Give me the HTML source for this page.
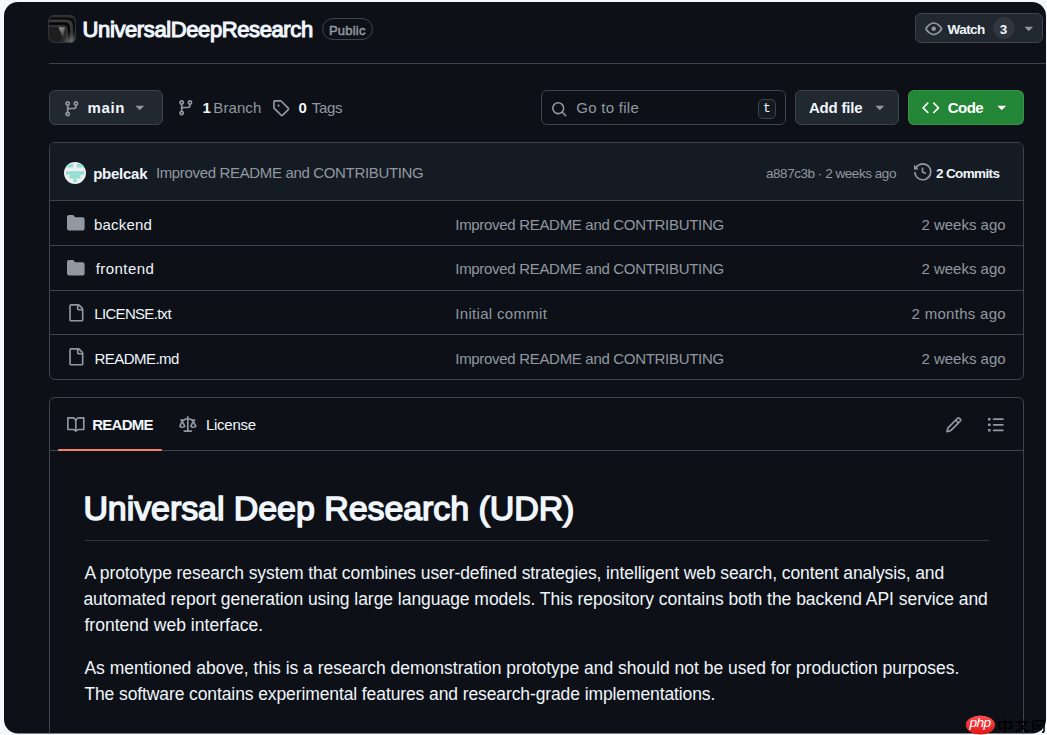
<!DOCTYPE html>
<html><head><meta charset="utf-8">
<style>
*{box-sizing:border-box;margin:0;padding:0}
html,body{width:1047px;height:735px;overflow:hidden;background:#f5f7fa;font-family:"Liberation Sans",sans-serif}
#wrap{position:absolute;left:0;top:0;width:1047px;height:735px;background:#0d1117;clip-path:inset(2px 1px 1.4px 4px round 14px)}
.a{position:absolute;white-space:nowrap;line-height:1}
.fg{color:#f0f6fc}
.mu{color:#9198a1}
.b{font-weight:700}
.box{position:absolute;border:1px solid #3d444d;border-radius:6px}
.btn{position:absolute;background:#212830;border:1px solid #3d444d;border-radius:6px}
svg{position:absolute;overflow:visible}
.hr{position:absolute;height:1px;background:#3d444d}
</style></head><body>
<div id="wrap">

<!-- repo header -->
<svg style="left:48px;top:15px" width="28" height="28" viewBox="0 0 28 28">
 <defs>
  <clipPath id="ca"><rect x="0" y="0" width="28" height="28" rx="6"/></clipPath>
  <linearGradient id="gw" x1="0" y1="0" x2="0.3" y2="1"><stop offset="0" stop-color="#9a9a9a"/><stop offset="1" stop-color="#3a3a3a"/></linearGradient>
  <radialGradient id="gr" cx="0.85" cy="1" r="0.5"><stop offset="0" stop-color="#8a8a8a"/><stop offset="1" stop-color="#2a2a2a" stop-opacity="0"/></radialGradient>
 </defs>
 <g clip-path="url(#ca)">
  <rect width="28" height="28" fill="#1e1e1e"/>
  <rect width="28" height="3" fill="#2e2e2e"/>
  <path d="M0 3.4 H19 Q26 3.4 26 10 V28" fill="none" stroke="#0a0a0a" stroke-width="2"/>
  <path d="M0 6 H18 Q23.5 6 23.5 12 V28" fill="none" stroke="#3c3c3c" stroke-width="2.6"/>
  <path d="M0 8.7 H16 Q21 8.7 21 14 V28" fill="none" stroke="#050505" stroke-width="2.2"/>
  <path d="M0 11.2 H14 Q18.6 11.2 18.6 16 V28" fill="none" stroke="#333" stroke-width="2.2"/>
  <path d="M10.5 12.3 L16.8 12.3 Q17 18 14.8 23 Z" fill="url(#gw)"/>
  <rect width="28" height="28" fill="url(#gr)"/>
 </g>
 <rect x="0.5" y="0.5" width="27" height="27" rx="6" fill="none" stroke="#30363d" stroke-width="1"/>
</svg>
<div class="box" style="left:322px;top:18px;width:51px;height:22px;border-radius:11px"></div>

<div class="btn" style="left:915px;top:13px;width:128px;height:30px"></div>
<svg style="left:925px;top:19.9px" width="17.6" height="17.6" viewBox="0 0 16 16"><path fill="#9198a1" d="M8 2c1.981 0 3.671.992 4.933 2.078 1.27 1.091 2.187 2.345 2.637 3.023a1.62 1.62 0 0 1 0 1.798c-.45.678-1.367 1.932-2.637 3.023C11.67 13.008 9.981 14 8 14c-1.981 0-3.671-.992-4.933-2.078C1.797 10.83.88 9.576.43 8.898a1.62 1.62 0 0 1 0-1.798c.45-.677 1.367-1.931 2.637-3.022C4.33 2.992 6.019 2 8 2ZM1.679 7.932a.12.12 0 0 0 0 .136c.411.622 1.241 1.75 2.366 2.717C5.176 11.758 6.527 12.5 8 12.5c1.473 0 2.825-.742 3.955-1.715 1.124-.967 1.954-2.096 2.366-2.717a.12.12 0 0 0 0-.136c-.412-.621-1.242-1.75-2.366-2.717C10.824 4.242 9.473 3.5 8 3.5c-1.473 0-2.825.742-3.955 1.715-1.124.967-1.954 2.096-2.366 2.717ZM8 10a2 2 0 1 1-.001-3.999A2 2 0 0 1 8 10Z"/></svg>
<div style="position:absolute;left:993px;top:17px;width:22px;height:22px;border-radius:11px;background:#2f363e"></div>
<svg style="left:1019.5px;top:19.1px" width="17.6" height="17.6" viewBox="0 0 16 16"><path fill="#9198a1" d="m4.427 7.427 3.396 3.396a.25.25 0 0 0 .354 0l3.396-3.396A.25.25 0 0 0 11.396 7H4.604a.25.25 0 0 0-.177.427Z"/></svg>

<div class="hr" style="left:49px;top:63px;width:997px"></div>

<!-- toolbar -->
<div class="btn" style="left:49px;top:90px;width:114px;height:35px"></div>
<svg style="left:62.6px;top:99.9px" width="17.6" height="17.6" viewBox="0 0 16 16"><path fill="#9198a1" d="M9.5 3.25a2.25 2.25 0 1 1 3 2.122V6A2.5 2.5 0 0 1 10 8.5H6a1 1 0 0 0-1 1v1.128a2.251 2.251 0 1 1-1.5 0V5.372a2.25 2.25 0 1 1 1.5 0v1.836A2.493 2.493 0 0 1 6 7h4a1 1 0 0 0 1-1v-.628A2.25 2.25 0 0 1 9.5 3.25Zm-6 0a.75.75 0 1 0 1.5 0 .75.75 0 0 0-1.5 0Zm8.25-.75a.75.75 0 1 0 0 1.5.75.75 0 0 0 0-1.5ZM4.25 12a.75.75 0 1 0 0 1.5.75.75 0 0 0 0-1.5Z"/></svg>
<svg style="left:130.8px;top:98.3px" width="17.6" height="17.6" viewBox="0 0 16 16"><path fill="#9198a1" d="m4.427 7.427 3.396 3.396a.25.25 0 0 0 .354 0l3.396-3.396A.25.25 0 0 0 11.396 7H4.604a.25.25 0 0 0-.177.427Z"/></svg>

<svg style="left:176.7px;top:99.2px" width="17.6" height="17.6" viewBox="0 0 16 16"><path fill="#9198a1" d="M9.5 3.25a2.25 2.25 0 1 1 3 2.122V6A2.5 2.5 0 0 1 10 8.5H6a1 1 0 0 0-1 1v1.128a2.251 2.251 0 1 1-1.5 0V5.372a2.25 2.25 0 1 1 1.5 0v1.836A2.493 2.493 0 0 1 6 7h4a1 1 0 0 0 1-1v-.628A2.25 2.25 0 0 1 9.5 3.25Zm-6 0a.75.75 0 1 0 1.5 0 .75.75 0 0 0-1.5 0Zm8.25-.75a.75.75 0 1 0 0 1.5.75.75 0 0 0 0-1.5ZM4.25 12a.75.75 0 1 0 0 1.5.75.75 0 0 0 0-1.5Z"/></svg>
<svg style="left:271.9px;top:98.9px" width="17.6" height="17.6" viewBox="0 0 16 16"><path fill="#9198a1" d="M1 7.775V2.75C1 1.784 1.784 1 2.75 1h5.025c.464 0 .91.184 1.238.513l6.25 6.25a1.75 1.75 0 0 1 0 2.474l-5.026 5.026a1.75 1.75 0 0 1-2.474 0l-6.25-6.25A1.752 1.752 0 0 1 1 7.775Zm1.5 0c0 .066.026.13.073.177l6.25 6.25a.25.25 0 0 0 .354 0l5.025-5.025a.25.25 0 0 0 0-.354l-6.25-6.25a.25.25 0 0 0-.177-.073H2.75a.25.25 0 0 0-.25.25ZM6 5a1 1 0 1 1 0 2 1 1 0 0 1 0-2Z"/></svg>

<div class="box" style="left:541px;top:90px;width:245px;height:35px"></div>
<svg style="left:550.8px;top:100.8px" width="16.5" height="16.5" viewBox="0 0 16 16"><path fill="#9198a1" d="M10.68 11.74a6 6 0 0 1-7.922-8.982 6 6 0 0 1 8.982 7.922l3.04 3.04a.749.749 0 0 1-.326 1.275.749.749 0 0 1-.734-.215ZM11.5 7a4.499 4.499 0 1 0-8.997 0A4.499 4.499 0 0 0 11.5 7Z"/></svg>
<div class="box" style="left:758px;top:98.5px;width:18px;height:20px;border-radius:5px;background:#151b23"></div>
<span style="position:absolute;left:763px;top:101.5px;line-height:1;font-family:'Liberation Mono',monospace;font-size:13px;color:#f0f6fc">t</span>

<div class="btn" style="left:794.5px;top:90px;width:104px;height:35px"></div>
<svg style="left:870.9px;top:98.3px" width="17.6" height="17.6" viewBox="0 0 16 16"><path fill="#9198a1" d="m4.427 7.427 3.396 3.396a.25.25 0 0 0 .354 0l3.396-3.396A.25.25 0 0 0 11.396 7H4.604a.25.25 0 0 0-.177.427Z"/></svg>

<div style="position:absolute;left:908px;top:90px;width:116px;height:35px;background:#238636;border:1px solid rgba(240,246,252,0.1);border-radius:6px"></div>
<svg style="left:922px;top:98.7px" width="17.6" height="17.6" viewBox="0 0 16 16"><path fill="#fff" d="m11.28 3.22 4.25 4.25a.75.75 0 0 1 0 1.06l-4.25 4.25a.749.749 0 0 1-1.275-.326.749.749 0 0 1 .215-.734L13.94 8l-3.72-3.72a.749.749 0 0 1 .326-1.275.749.749 0 0 1 .734.215Zm-6.56 0a.751.751 0 0 1 1.042.018.751.751 0 0 1 .018 1.042L2.06 8l3.72 3.72a.749.749 0 0 1-.326 1.275.749.749 0 0 1-.734-.215L.47 8.53a.75.75 0 0 1 0-1.06Z"/></svg>
<svg style="left:992.7px;top:98.3px" width="17.6" height="17.6" viewBox="0 0 16 16"><path fill="#fff" d="m4.427 7.427 3.396 3.396a.25.25 0 0 0 .354 0l3.396-3.396A.25.25 0 0 0 11.396 7H4.604a.25.25 0 0 0-.177.427Z"/></svg>

<!-- files box -->
<div class="box" style="left:49px;top:142px;width:975px;height:238px;overflow:hidden">
  <div style="position:absolute;left:0;top:0;right:0;height:58px;background:#151b23;border-bottom:1px solid #3d444d"></div>
  <div style="position:absolute;left:0;right:0;top:102px;height:1px;background:#3d444d"></div>
  <div style="position:absolute;left:0;right:0;top:147px;height:1px;background:#3d444d"></div>
  <div style="position:absolute;left:0;right:0;top:191px;height:1px;background:#3d444d"></div>
</div>

<!-- commit header content -->
<svg style="left:64px;top:162px" width="22" height="22" viewBox="0 0 22 22">
 <defs><clipPath id="cu"><circle cx="11" cy="11" r="11"/></clipPath></defs>
 <g clip-path="url(#cu)">
  <rect width="22" height="22" fill="#f0f0f0"/>
  <g fill="#93e0d2">
   <rect x="1.83" y="1.83" width="7.34" height="3.67"/>
   <rect x="12.83" y="1.83" width="7.34" height="3.67"/>
   <rect x="1.83" y="9.17" width="18.34" height="3.67"/>
   <rect x="5.5" y="12.83" width="11" height="3.67"/>
   <rect x="9.17" y="16.5" width="3.67" height="3.67"/>
  </g>
 </g>
</svg>
<svg style="left:914px;top:162.8px" width="17.6" height="17.6" viewBox="0 0 16 16"><path fill="#9198a1" d="m.427 1.927 1.215 1.215a8.002 8.002 0 1 1-1.6 5.685.75.75 0 1 1 1.493-.154 6.5 6.5 0 1 0 1.18-4.458l1.358 1.358A.25.25 0 0 1 3.896 6H.25A.25.25 0 0 1 0 5.75V2.104a.25.25 0 0 1 .427-.177ZM7.75 4a.75.75 0 0 1 .75.75v2.992l2.028.812a.75.75 0 0 1-.557 1.392l-2.5-1A.751.751 0 0 1 7 8.25v-3.5A.75.75 0 0 1 7.75 4Z"/></svg>

<!-- rows -->
<svg style="left:66.8px;top:214px" width="17.6" height="17.6" viewBox="0 0 16 16"><path fill="#9198a1" d="M1.75 1A1.75 1.75 0 0 0 0 2.75v10.5C0 14.216.784 15 1.75 15h12.5A1.75 1.75 0 0 0 16 13.25v-8.5A1.75 1.75 0 0 0 14.25 3H7.5a.25.25 0 0 1-.2-.1l-.9-1.2C6.07 1.26 5.55 1 5 1H1.75Z"/></svg>

<svg style="left:66.8px;top:258.6px" width="17.6" height="17.6" viewBox="0 0 16 16"><path fill="#9198a1" d="M1.75 1A1.75 1.75 0 0 0 0 2.75v10.5C0 14.216.784 15 1.75 15h12.5A1.75 1.75 0 0 0 16 13.25v-8.5A1.75 1.75 0 0 0 14.25 3H7.5a.25.25 0 0 1-.2-.1l-.9-1.2C6.07 1.26 5.55 1 5 1H1.75Z"/></svg>

<svg style="left:66.8px;top:303.5px" width="17.6" height="17.6" viewBox="0 0 16 16"><path fill="#9198a1" d="M2 1.75C2 .784 2.784 0 3.75 0h6.586c.464 0 .909.184 1.237.513l2.914 2.914c.329.328.513.773.513 1.237v9.586A1.75 1.75 0 0 1 13.25 16h-9.5A1.75 1.75 0 0 1 2 14.25Zm1.75-.25a.25.25 0 0 0-.25.25v12.5c0 .138.112.25.25.25h9.5a.25.25 0 0 0 .25-.25V6h-2.75A1.75 1.75 0 0 1 9 4.25V1.5Zm6.75.062V4.25c0 .138.112.25.25.25h2.688l-.011-.013-2.914-2.914-.013-.011Z"/></svg>

<svg style="left:66.8px;top:348px" width="17.6" height="17.6" viewBox="0 0 16 16"><path fill="#9198a1" d="M2 1.75C2 .784 2.784 0 3.75 0h6.586c.464 0 .909.184 1.237.513l2.914 2.914c.329.328.513.773.513 1.237v9.586A1.75 1.75 0 0 1 13.25 16h-9.5A1.75 1.75 0 0 1 2 14.25Zm1.75-.25a.25.25 0 0 0-.25.25v12.5c0 .138.112.25.25.25h9.5a.25.25 0 0 0 .25-.25V6h-2.75A1.75 1.75 0 0 1 9 4.25V1.5Zm6.75.062V4.25c0 .138.112.25.25.25h2.688l-.011-.013-2.914-2.914-.013-.011Z"/></svg>

<!-- readme box -->
<div class="box" style="left:49px;top:397px;width:975px;height:400px"></div>
<div class="hr" style="left:50px;top:450px;width:973px"></div>
<div style="position:absolute;left:58px;top:449px;width:104px;height:2px;background:#f78166;border-radius:1px"></div>
<svg style="left:67px;top:415.9px" width="17.6" height="17.6" viewBox="0 0 16 16"><path fill="#9198a1" d="M0 1.75A.75.75 0 0 1 .75 1h4.253c1.227 0 2.317.59 3 1.501A3.743 3.743 0 0 1 11.006 1h4.245a.75.75 0 0 1 .75.75v10.5a.75.75 0 0 1-.75.75h-4.507a2.25 2.25 0 0 0-1.591.659l-.622.621a.75.75 0 0 1-1.06 0l-.622-.621A2.25 2.25 0 0 0 5.258 13H.75a.75.75 0 0 1-.75-.75Zm7.251 10.324.004-5.073-.002-2.253A2.25 2.25 0 0 0 5.003 2.5H1.5v9h3.757a3.75 3.75 0 0 1 1.994.574ZM8.755 4.75l-.004 7.322a3.752 3.752 0 0 1 1.992-.572H14.5v-9h-3.495a2.25 2.25 0 0 0-2.25 2.25Z"/></svg>
<svg style="left:179.4px;top:415.7px" width="17.6" height="17.6" viewBox="0 0 16 16"><path fill="#9198a1" d="M8.75.75V2h.985c.304 0 .603.08.867.231l1.29.736c.038.022.08.033.124.033h2.234a.75.75 0 0 1 0 1.5h-.427l2.111 4.692a.75.75 0 0 1-.154.838l-.53-.53.529.531-.001.002-.002.002-.006.006-.006.005-.01.01-.045.04c-.21.176-.441.327-.686.45C14.556 10.780 13.880 11 13 11a4.498 4.498 0 0 1-2.023-.454 3.544 3.544 0 0 1-.686-.45l-.045-.04-.016-.015-.006-.006-.004-.004v-.001a.75.75 0 0 1-.154-.838L12.178 4.5h-.162c-.305 0-.604-.079-.868-.231l-1.290-.736a.245.245 0 0 0-.124-.033H8.75V13h2.5a.75.75 0 0 1 0 1.5h-6.5a.75.75 0 0 1 0-1.5h2.5V3.5h-.984a.245.245 0 0 0-.124.033l-1.289.737c-.265.15-.564.23-.869.23h-.162l2.112 4.692a.75.75 0 0 1-.154.838l-.53-.53.529.531-.001.002-.002.002-.006.006-.016.015-.045.04c-.21.176-.441.327-.686.45C4.556 10.78 3.88 11 3 11a4.498 4.498 0 0 1-2.023-.454 3.544 3.544 0 0 1-.686-.45l-.045-.04-.016-.015-.006-.006-.004-.004v-.001a.75.75 0 0 1-.154-.838L2.178 4.5H1.75a.75.75 0 0 1 0-1.5h2.234a.249.249 0 0 0 .125-.033l1.288-.737c.265-.15.564-.23.869-.23h.984V.75a.75.75 0 0 1 1.5 0Zm2.945 8.477c.285.135.718.273 1.305.273s1.02-.138 1.305-.273L13 6.327Zm-10 0c.285.135.718.273 1.305.273s1.02-.138 1.305-.273L3 6.327Z"/></svg>
<svg style="left:944.7px;top:415.7px" width="17.6" height="17.6" viewBox="0 0 16 16"><path fill="#9198a1" d="M11.013 1.427a1.75 1.75 0 0 1 2.474 0l1.086 1.086a1.75 1.75 0 0 1 0 2.474l-8.61 8.61c-.21.21-.47.364-.756.445l-3.251.93a.75.75 0 0 1-.927-.928l.929-3.25c.081-.286.235-.547.445-.758l8.61-8.61Zm.176 4.823L9.75 4.81l-6.286 6.287a.253.253 0 0 0-.064.108l-.558 1.953 1.953-.558a.253.253 0 0 0 .108-.064Zm1.238-3.763a.25.25 0 0 0-.354 0L10.811 3.75l1.439 1.44 1.263-1.263a.25.25 0 0 0 0-.354Z"/></svg>
<svg style="left:980px;top:410px" width="30" height="30" viewBox="980 410 30 30"><g fill="#9198a1">
 <rect x="988" y="417.9" width="2.6" height="2.6" rx="0.4"/><rect x="988" y="423.5" width="2.6" height="2.6" rx="0.4"/><rect x="988" y="429" width="2.6" height="2.6" rx="0.4"/>
 <rect x="992.8" y="418.3" width="11" height="1.8" rx="0.9"/><rect x="992.8" y="423.9" width="11" height="1.8" rx="0.9"/><rect x="992.8" y="429.4" width="11" height="1.8" rx="0.9"/>
</g></svg>

<div class="hr" style="left:85px;top:540px;width:904px;background:#2f353d"></div>

<span class="a" style="left:82.60px;top:19.00px;font-size:22px;font-weight:400;color:#f0f6fc;letter-spacing:-0.395px;-webkit-text-stroke:1.1px #f0f6fc">UniversalDeepResearch</span>
<span class="a" style="left:329.00px;top:23.60px;font-size:13px;font-weight:400;color:#9198a1;letter-spacing:0.200px;-webkit-text-stroke:0.5px #9198a1">Public</span>
<span class="a" style="left:947.50px;top:22.80px;font-size:13.5px;font-weight:700;color:#f0f6fc;letter-spacing:-0.550px">Watch</span>
<span class="a" style="left:999.80px;top:22.80px;font-size:13.5px;font-weight:700;color:#f0f6fc;letter-spacing:0.000px">3</span>
<span class="a" style="left:87.60px;top:100.30px;font-size:15px;font-weight:700;color:#f0f6fc;letter-spacing:0.567px">main</span>
<span class="a" style="left:202.50px;top:99.90px;font-size:15px;font-weight:700;color:#f0f6fc;letter-spacing:0.000px">1</span>
<span class="a" style="left:213.30px;top:99.90px;font-size:15px;font-weight:400;color:#9198a1;letter-spacing:0.080px">Branch</span>
<span class="a" style="left:298.50px;top:99.90px;font-size:15px;font-weight:700;color:#f0f6fc;letter-spacing:0.000px">0</span>
<span class="a" style="left:311.80px;top:99.90px;font-size:15px;font-weight:400;color:#9198a1;letter-spacing:-0.333px">Tags</span>
<span class="a" style="left:576.20px;top:99.80px;font-size:15px;font-weight:400;color:#9198a1;letter-spacing:0.289px">Go to file</span>
<span class="a" style="left:808.90px;top:100.20px;font-size:15px;font-weight:700;color:#f0f6fc;letter-spacing:-0.186px">Add file</span>
<span class="a" style="left:947.80px;top:100.20px;font-size:15px;font-weight:700;color:#ffffff;letter-spacing:-0.533px">Code</span>
<span class="a" style="left:93.20px;top:165.50px;font-size:15px;font-weight:700;color:#f0f6fc;letter-spacing:-0.250px">pbelcak</span>
<span class="a" style="left:155.90px;top:165.40px;font-size:15px;font-weight:400;color:#9198a1;letter-spacing:-0.342px">Improved README and CONTRIBUTING</span>
<span class="a" style="left:766.00px;top:167.10px;font-size:13.5px;font-weight:400;color:#9198a1;letter-spacing:-0.460px">a887c3b · 2 weeks ago</span>
<span class="a" style="left:935.90px;top:166.60px;font-size:13.5px;font-weight:700;color:#f0f6fc;letter-spacing:-0.612px">2 Commits</span>
<span class="a" style="left:94.00px;top:216.90px;font-size:15px;font-weight:400;color:#f0f6fc;letter-spacing:0.200px">backend</span>
<span class="a" style="left:455.30px;top:216.90px;font-size:15px;font-weight:400;color:#9198a1;letter-spacing:-0.310px">Improved README and CONTRIBUTING</span>
<span class="a" style="left:921.40px;top:216.90px;font-size:15px;font-weight:400;color:#9198a1;letter-spacing:0.000px">2 weeks ago</span>
<span class="a" style="left:95.70px;top:261.40px;font-size:15px;font-weight:400;color:#f0f6fc;letter-spacing:0.457px">frontend</span>
<span class="a" style="left:455.30px;top:261.40px;font-size:15px;font-weight:400;color:#9198a1;letter-spacing:-0.310px">Improved README and CONTRIBUTING</span>
<span class="a" style="left:921.40px;top:261.40px;font-size:15px;font-weight:400;color:#9198a1;letter-spacing:0.000px">2 weeks ago</span>
<span class="a" style="left:94.30px;top:305.90px;font-size:15px;font-weight:400;color:#f0f6fc;letter-spacing:-0.690px">LICENSE.txt</span>
<span class="a" style="left:455.30px;top:305.90px;font-size:15px;font-weight:400;color:#9198a1;letter-spacing:0.315px">Initial commit</span>
<span class="a" style="left:911.60px;top:305.90px;font-size:15px;font-weight:400;color:#9198a1;letter-spacing:0.291px">2 months ago</span>
<span class="a" style="left:94.50px;top:350.60px;font-size:15px;font-weight:400;color:#f0f6fc;letter-spacing:-0.538px">README.md</span>
<span class="a" style="left:455.30px;top:350.60px;font-size:15px;font-weight:400;color:#9198a1;letter-spacing:-0.310px">Improved README and CONTRIBUTING</span>
<span class="a" style="left:921.40px;top:350.60px;font-size:15px;font-weight:400;color:#9198a1;letter-spacing:0.000px">2 weeks ago</span>
<span class="a" style="left:92.20px;top:417.10px;font-size:15px;font-weight:700;color:#f0f6fc;letter-spacing:-0.740px">README</span>
<span class="a" style="left:205.90px;top:417.10px;font-size:15px;font-weight:400;color:#f0f6fc;letter-spacing:-0.233px">License</span>
<span class="a" style="left:83.40px;top:491.00px;font-size:34px;font-weight:400;color:#f0f6fc;letter-spacing:-0.075px;-webkit-text-stroke:1.5px #f0f6fc">Universal Deep Research (UDR)</span>
<span class="a" style="left:84.40px;top:564.60px;font-size:17.5px;font-weight:400;color:#f0f6fc;letter-spacing:-0.097px">A prototype research system that combines user-defined strategies, intelligent web search, content analysis, and</span>
<span class="a" style="left:83.40px;top:590.70px;font-size:17.5px;font-weight:400;color:#f0f6fc;letter-spacing:-0.043px">automated report generation using large language models. This repository contains both the backend API service and</span>
<span class="a" style="left:84.40px;top:616.60px;font-size:17.5px;font-weight:400;color:#f0f6fc;letter-spacing:0.032px">frontend web interface.</span>
<span class="a" style="left:84.40px;top:660.20px;font-size:17.5px;font-weight:400;color:#f0f6fc;letter-spacing:-0.005px">As mentioned above, this is a research demonstration prototype and should not be used for production purposes.</span>
<span class="a" style="left:84.40px;top:686.30px;font-size:17.5px;font-weight:400;color:#f0f6fc;letter-spacing:-0.104px">The software contains experimental features and research-grade implementations.</span>
</div>
<svg style="left:960px;top:710px" width="87" height="25" viewBox="960 710 87 25">
 <defs><linearGradient id="gred" x1="0" y1="0" x2="0" y2="1"><stop offset="0" stop-color="#ff4d4d"/><stop offset="1" stop-color="#e41414"/></linearGradient></defs>
 <ellipse cx="980.4" cy="725" rx="14.6" ry="9.4" fill="url(#gred)"/>
 <text x="969.5" y="727.2" font-family="Liberation Sans" font-style="italic" font-size="13" fill="#fff" letter-spacing="-0.6" textLength="21" lengthAdjust="spacingAndGlyphs">php</text>
 <g fill="none" stroke="#000" stroke-width="1.6">
  <rect x="999" y="722" width="12.5" height="6.5"/>
  <path d="M1005.2 719 V732"/>
  <path d="M1022 719.2 V721 M1016 722 H1028.5 M1018.5 722 Q1021 729 1028.5 731.5 M1026 722 Q1023 729 1015.5 731.5"/>
  <path d="M1033 732 V721 H1044 V731 Q1044 732.5 1042 732 M1035 724 L1041.5 730 M1041.5 724 L1035 730"/>
 </g>
</svg>
</body></html>
